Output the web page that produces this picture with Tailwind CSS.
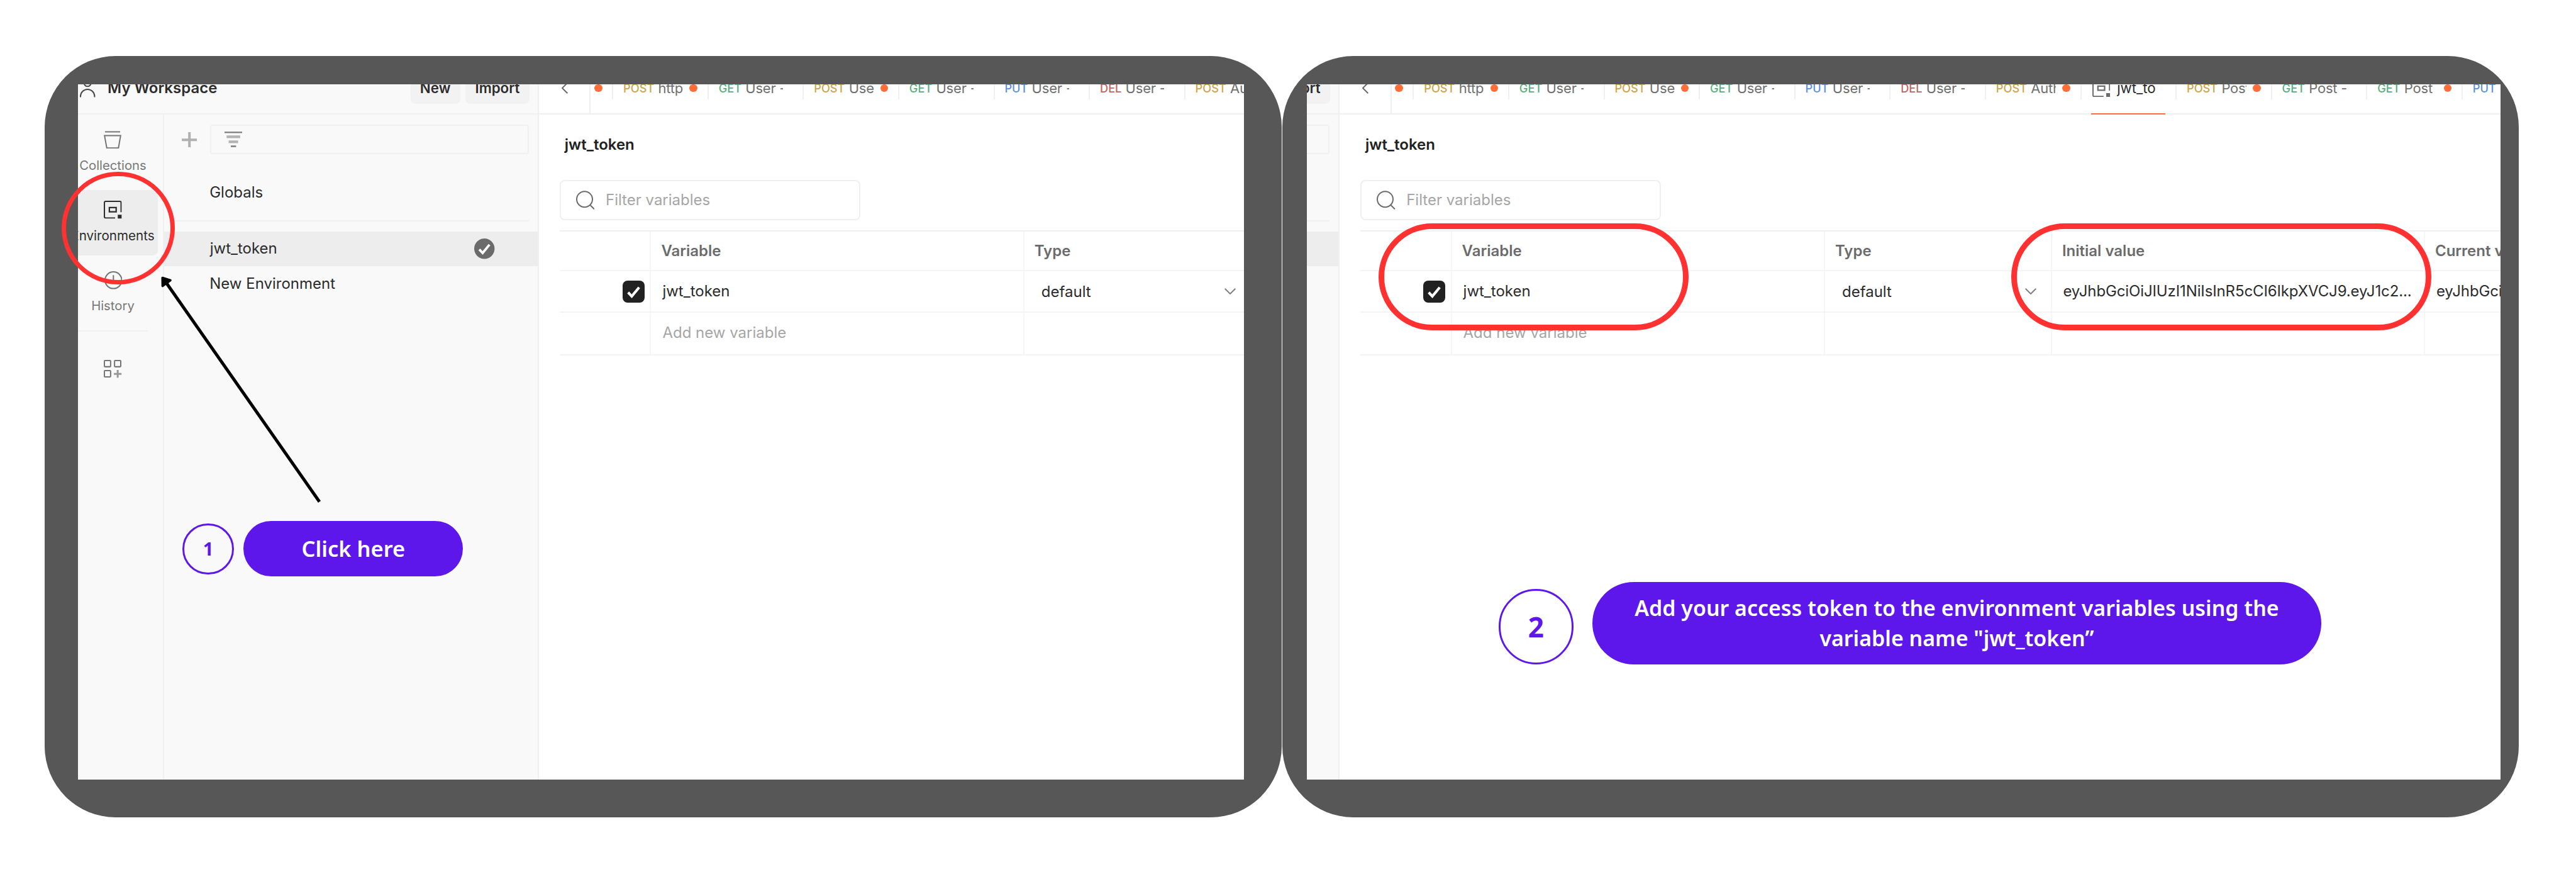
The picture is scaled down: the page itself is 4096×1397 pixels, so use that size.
<!DOCTYPE html>
<html lang="en">
<head>
<meta charset="utf-8">
<title>Environment setup guide</title>
<script src="https://cdn.jsdelivr.net/npm/@tailwindcss/browser@4"></script>
</head>
<body class="relative h-[1397px] w-[4096px] overflow-hidden bg-white font-['Inter',sans-serif] text-[24px] leading-[32px] text-[#2c2c2c]">

<svg class="hidden">
  <symbol id="i-env" viewBox="0 0 28 28"><path d="M27 17.8V3a2 2 0 0 0-2-2H3a2 2 0 0 0-2 2v22a2 2 0 0 0 2 2h14.6" fill="none" stroke="currentColor" stroke-width="2"/><path d="M8.7 10.7h10.6v6.6H8.7z" fill="none" stroke="currentColor" stroke-width="2.2"/><path d="M21.8 21.8H28V28h-6.2z" fill="currentColor"/></symbol>
  <symbol id="i-check" viewBox="0 0 34 34"><path d="M8.5 18.2l5.6 6L25.500 10.400" fill="none" stroke="#fff" stroke-width="4"/></symbol>
</svg>

<main class="flex gap-[0.9px] pt-[89.1px] pl-[71.2px]">

  <!-- Step 1 -->
  <section class="h-[1210.2px] w-[1967px] shrink-0 rounded-[113px] bg-[#575757] pt-[45.4px] pl-[52.6px]">
    <div class="h-[1104.4px] w-[1854.2px] overflow-hidden bg-white">
      <div class="-mt-[36.500px] flex h-[1141px] w-full">
        <aside class="flex w-[733.5px] shrink-0 flex-col border-r-2 border-[#f0f0f0] bg-[#f9f9f9]">
          <header class="flex h-[84.2px] shrink-0 items-center border-b-2 border-[#f0f0f0] pt-[1.600px] pr-[13.7px] pl-[3.6px]">
            <svg class="h-[29.6px] w-[24.4px]" viewBox="0 0 24.4 29.6" fill="none" stroke="#4a4a4a" stroke-width="2"><circle cx="12.2" cy="6.8" r="5.5"/><path d="M1 29.600V28a11.200 11 0 0 1 22.400 0v1.600"/></svg>
            <span class="ml-[19.300px] font-semibold">My Workspace</span>
            <span class="ml-auto flex h-[49.4px] w-[79px] items-center justify-center rounded-[8px] bg-[#f2f2f2] text-[22.3px] font-semibold">New</span>
            <span class="ml-[8.6px] flex h-[49.4px] w-[101.4px] items-center justify-center rounded-[8px] bg-[#f2f2f2] text-[22.3px] font-semibold">Import</span>
          </header>
          <div class="flex min-h-0 flex-1">
            <nav class="-ml-[24px] flex w-[161.4px] shrink-0 flex-col items-center border-r-2 border-[#f0f0f0] pt-[8.1px] text-[20.3px] leading-[24px] text-[#787878]">
              <div class="flex h-[103.700px] w-[143px] flex-col items-center pt-[17.5px]">
                <svg class="h-[28.600px] w-[28px]" viewBox="0 0 28 28.6" fill="none" stroke="#757575" stroke-width="2"><path d="M2 1.400h24M1.200 7.600h25.600l-3.500 19.700H4.800z"/></svg>
                <span class="mt-[14.500px]">Collections</span>
              </div>
              <div class="mt-[8px] flex h-[103.700px] w-[143px] flex-col items-center rounded-[8px] bg-[#ededed] pt-[17.5px] text-[#2c2c2c]">
                <svg class="size-[28.6px]"><use href="#i-env"/></svg>
                <span class="mt-[14.500px] text-[20.600px]">Environments</span>
              </div>
              <div class="mt-[8px] flex h-[103.700px] w-[143px] flex-col items-center pt-[17.5px]">
                <svg class="size-[28.600px]" viewBox="0 0 28 28" fill="none" stroke="#757575" stroke-width="2"><circle cx="15" cy="14" r="13"/><path d="M15 6v9l4 3"/></svg>
                <span class="mt-[14.500px]">History</span>
              </div>
              <div class="mt-[7.6px] h-[2px] w-[111px] bg-[#f0f0f0]"></div>
              <svg class="mt-[45.500px] size-[28.200px]" viewBox="0 0 28 28" fill="none" stroke="#757575" stroke-width="2"><rect x="1" y="1" width="9.800" height="9.800" rx="1"/><rect x="17" y="1" width="9.800" height="9.800" rx="1"/><rect x="1" y="17" width="9.800" height="9.800" rx="1"/><path d="M22 16v12M16 22h12" stroke="#999" stroke-width="3"/></svg>
            </nav>
            <div class="min-w-0 flex-1 pt-[16.3px]">
              <div class="flex items-center pr-[14.2px] pl-[27.600px]">
                <svg class="size-[24.5px] shrink-0" viewBox="0 0 24.5 24.5"><path d="M12.200 0v24.500M0 12.200h24.500" stroke="#b0b0b0" stroke-width="4"/></svg>
                <div class="ml-[21.1px] flex h-[47px] flex-1 items-center rounded-[4px] border-2 border-[#f0f0f0] pl-[20.500px]">
                  <svg class="h-[25px] w-[28.400px]" viewBox="0 0 28.400 25"><path d="M0 1.400h28.400M10 23.500h8.400" stroke="#7c7c7c" stroke-width="2.400"/><path d="M3.300 8.400h21.600M6.600 16.400h15" stroke="#b3b3b3" stroke-width="4.400"/></svg>
                </div>
              </div>
              <div class="mt-[32px] flex h-[55.400px] items-center pt-[1px] pl-[72px]">Globals</div>
              <div class="mt-[17.1px] mr-[14.2px] ml-[16px] h-[2px] bg-[#f0f0f0]"></div>
              <div class="mt-[15.7px] flex h-[55.4px] items-center justify-between bg-[#ededed] pr-[68.500px] pl-[72.500px]">
                jwt_token
                <svg class="size-[32.400px]" viewBox="0 0 34 34"><circle cx="17" cy="17" r="17" fill="#6b6b6b"/><use href="#i-check" width="34" height="34"/></svg>
              </div>
              <div class="flex h-[55.400px] items-center pl-[72px]">New Environment</div>
            </div>
          </div>
        </aside>
        <div data-editor="1" class="min-w-0 flex-1 overflow-hidden"></div>
      </div>
    </div>
  </section>

  <!-- Step 2 -->
  <section class="h-[1210.2px] w-[1966.4px] shrink-0 rounded-[113px] bg-[#575757] pt-[45.4px] pl-[38.8px]">
    <div class="h-[1104.4px] w-[1898.5px] overflow-hidden bg-white">
      <div class="-mt-[36.500px] flex h-[1141px] w-full">
        <aside class="flex w-[52.600px] shrink-0 flex-col overflow-hidden border-r-2 border-[#f0f0f0] bg-[#f9f9f9]">
          <header class="flex h-[84.2px] shrink-0 items-center border-b-2 border-[#f0f0f0] pt-[1.600px] pr-[13.7px]">
            <span class="flex h-[49.4px] w-full items-center justify-end rounded-r-[8px] bg-[#f2f2f2] pr-[15.200px] text-[22.3px] font-semibold">Import</span>
          </header>
          <div class="mt-[16.3px] mr-[14.2px] h-[47px] rounded-r-[4px] border-2 border-l-0 border-[#f0f0f0]"></div>
          <div class="mt-[104.5px] mr-[14.2px] h-[2px] bg-[#f0f0f0]"></div>
          <div class="mt-[15.7px] h-[55.4px] bg-[#ededed]"></div>
        </aside>
        <div data-editor="2" class="min-w-0 flex-1 overflow-hidden"></div>
      </div>
    </div>
  </section>
</main>

<!-- Annotations -->
<div class="absolute top-[272.7px] left-[98.3px] h-[179.200px] w-[179.400px] rounded-full border-[7.600px] border-[#ff3131]"></div>
<svg class="absolute top-[430px] left-[250px] h-[380px] w-[270px]" viewBox="250 430 270 380"><path d="M508 797.500L263 447.500" stroke="#000" stroke-width="5"/><path d="M258.300 441.500L271 445.500 258.500 454.500z" stroke="#000" stroke-width="3.600" stroke-linejoin="round"/></svg>
<div class="absolute top-[828.3px] left-[290.3px] flex items-center gap-[15.6px] font-['Noto_Sans',sans-serif] font-semibold">
  <span class="flex size-[81.500px] items-center justify-center rounded-full border-3 border-[#5e17eb] text-[29.300px] font-bold text-[#5e17eb]">1</span>
  <span class="flex h-[88.200px] w-[348.900px] items-center justify-center rounded-full bg-[#5e17eb] text-[34.5px] text-white">Click here</span>
</div>
<div class="absolute top-[354.6px] left-[2192px] h-[170px] w-[493px] rounded-full border-[9px] border-[#ff3131]"></div>
<div class="absolute top-[354.6px] left-[3198.2px] h-[170px] w-[668.200px] rounded-full border-[9px] border-[#ff3131]"></div>
<div class="absolute top-[925.4px] left-[2382.6px] flex items-end gap-[29.8px] font-['Noto_Sans',sans-serif]">
  <span class="flex size-[119.300px] items-center justify-center rounded-full border-[3.800px] border-[#5e17eb] text-[44px] font-bold text-[#5e17eb]">2</span>
  <span class="flex h-[130.3px] w-[1159.500px] items-center justify-center rounded-full bg-[#5e17eb] text-center text-[33.950px] leading-[47.400px] font-semibold whitespace-nowrap text-white">Add your access token to the environment variables using the<br>variable name "jwt_token”</span>
</div>

<script>
const METHOD = { POST: 'text-[#cfa54b]', GET: 'text-[#57ae7c]', PUT: 'text-[#5a90dc]', DEL: 'text-[#bd6660]' };
const DOT = '<i class="size-[12.400px] shrink-0 rounded-full bg-[#ff6c37]"></i>';
const TABS = [
  ['POST', 'http', 1], ['GET', 'User -'], ['POST', 'User', 1], ['GET', 'User -'], ['PUT', 'User -'], ['DEL', 'User -'], ['POST', 'Auth', 1],
  ['ENV', 'jwt_to'], ['POST', 'Post', 1], ['GET', 'Post -'], ['GET', 'Post', 1], ['PUT', 'Post']
];
function tab([method, name, dirty]) {
  if (method === 'ENV') return `
    <div class="relative flex h-[82px] w-[151.6px] shrink-0 items-center">
      <span class="h-[36px] w-[2px] bg-[#f0f0f0]"></span>
      <svg class="ml-[17.8px] size-[28.300px] text-[#6b6b6b]"><use href="#i-env"/></svg>
      <span class="ml-[10.500px] text-[22.3px]">${name}</span>
      <span class="absolute -bottom-[1.500px] left-[17.7px] h-[2.400px] w-[118px] bg-[#ff6c37]"></span>
    </div>`;
  return `
    <div class="flex w-[151.6px] shrink-0 items-center ${dirty ? 'pr-[16px]' : 'pr-[31.600px]'}">
      <span class="h-[36px] w-[2px] shrink-0 bg-[#f0f0f0]"></span>
      <span class="ml-[15.800px] text-[18.2px] font-medium ${METHOD[method]}">${method}</span>
      <span class="ml-[6.200px] min-w-0 flex-1 overflow-hidden text-[22px] tracking-[-0.2px] whitespace-nowrap text-[#707070]">${name}</span>
      ${dirty ? '<span class="w-[10px] shrink-0"></span>' + DOT : ''}
    </div>`;
}
function editor(full) {
  const grid = 'grid grid-cols-[145.3px_593.4px_361px_593px_593px] w-[2286px]';
  const cell = 'flex items-center border-r-2 border-[#f6f6f6] ';
  const token = 'eyJhbGciOiJIUzI1NiIsInR5cCI6IkpXVCJ9.eyJ1c2...';
  return `
  <div class="flex h-[84.2px] items-center border-b-2 border-[#f0f0f0] pt-[1.600px]">
    <svg class="ml-[36px] h-[18px] w-[10px] shrink-0" viewBox="0 0 10 18" fill="none" stroke="#6b6b6b" stroke-width="2"><path d="M9.300.700L1 9l8.300 8.300"/></svg>
    <span class="ml-[34.200px] h-[82px] w-[2px] shrink-0 bg-[#f0f0f0]"></span>
    <span class="mr-[15.700px] ml-[5.7px] flex">${DOT}</span>
    ${(full ? TABS : TABS.slice(0, 7)).map(tab).join('')}
  </div>
  <div class="pt-[32px] pl-[32.800px]">
    <h1 class="pl-[7.700px] font-semibold text-[#212121]">jwt_token</h1>
    <div class="mt-[40.2px] flex h-[63.4px] w-[477.500px] items-center rounded-[8px] border-2 border-[#f0f0f0] pl-[23.900px] text-[#a6a6a6]">
      <svg class="h-[29.500px] w-[29.500px]" viewBox="0 0 29.500 29.500" fill="none" stroke="#6b6b6b" stroke-width="2"><circle cx="13.500" cy="13.700" r="12.500"/><path d="M22 22.500l7 7"/></svg>
      <span class="ml-[17.500px] pb-[1px]">Filter variables</span>
    </div>
    <div class="mt-[16px] border-t-2 border-[#f0f0f0]">
      <div class="${grid} h-[63.7px] border-b-2 border-[#f4f4f4] font-semibold text-[#6b6b6b]">
        <div class="${cell}"></div>
        <div class="${cell} pl-[16px]">Variable</div>
        <div class="${cell} pl-[16px]">Type</div>
        ${full ? `<div class="${cell} pl-[16px]">Initial value</div><div class="${cell} pl-[16px]">Current value</div>` : ''}
      </div>
      <div class="${grid} h-[65.7px] border-b-2 border-[#f4f4f4]">
        <div class="${cell} justify-end pr-[8.500px]"><svg class="size-[35px] rounded-[8px] bg-[#212121]"><use href="#i-check"/></svg></div>
        <div class="${cell} pl-[18px]">jwt_token</div>
        <div class="${cell} justify-between pr-[22.500px] pl-[27px]"><span class="pt-[2px]">default</span><svg class="h-[10px] w-[18px]" viewBox="0 0 18 10" fill="none" stroke="#808080" stroke-width="2"><path d="M.700.700L9 9l8.300-8.300"/></svg></div>
        ${full ? `<div class="${cell} pl-[17.500px] tracking-[-0.12px]">${token}</div><div class="${cell} pl-[18px] tracking-[-0.12px]">${token}</div>` : ''}
      </div>
      <div class="${grid} h-[67.7px] border-b-2 border-[#f4f4f4] text-[#a6a6a6]">
        <div class="${cell}"></div>
        <div class="${cell} pb-[2px] pl-[18px]">Add new variable</div>
        <div class="${cell}"></div>
        ${full ? `<div class="${cell}"></div><div></div>` : ''}
      </div>
    </div>
  </div>`;
}
document.querySelector('[data-editor="1"]').innerHTML = editor(false);
document.querySelector('[data-editor="2"]').innerHTML = editor(true);
</script>
</body>
</html>
